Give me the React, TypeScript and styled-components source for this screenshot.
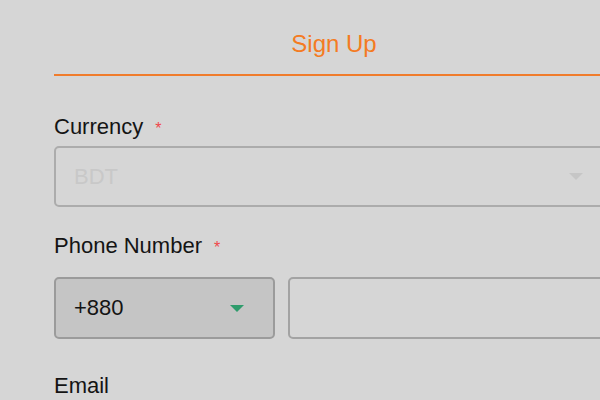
import React from 'react';
import styled, { createGlobalStyle } from 'styled-components';

const GlobalStyle = createGlobalStyle`
  html, body {
    margin: 0;
    padding: 0;
    background: #d6d6d6;
    overflow: hidden;
    font-family: 'Liberation Sans', Arial, sans-serif;
  }
`;

const App: React.FC = () => {
  return (
    <Page>
      <GlobalStyle />
      <Form>
        <Title>Sign Up</Title>

        <Label $top={40}>
          Currency<Required>*</Required>
        </Label>
        <SelectBox $gap={6}>
          <Placeholder>BDT</Placeholder>
          <Caret $color="#c6c6c6" />
        </SelectBox>

        <Label $top={28}>
          Phone Number<Required>*</Required>
        </Label>
        <PhoneRow>
          <CodeSelect>
            <CodeText>+880</CodeText>
            <Caret $color="#2f9c6c" />
          </CodeSelect>
          <TextBox />
        </PhoneRow>

        <Label $top={36}>Email</Label>
      </Form>
    </Page>
  );
};

export default App;

const Page = styled.div`
  width: 600px;
  height: 400px;
  overflow: hidden;
`;

const Form = styled.div`
  display: flex;
  flex-direction: column;
  width: 560px;
  margin-left: 54px;
`;

const Title = styled.div`
  padding: 32px 0 18px;
  font-size: 24px;
  line-height: 24px;
  color: #f47b22;
  text-align: center;
  border-bottom: 2px solid #f07c2c;
`;

interface ILabelProps {
  $top: number;
}

const Label = styled.div<ILabelProps>`
  margin-top: ${({ $top }) => $top}px;
  font-size: 22px;
  line-height: 22px;
  color: #141414;
`;

const Required = styled.span`
  margin-left: 12px;
  font-size: 16px;
  color: #f0474a;
`;

interface ISelectProps {
  $gap: number;
}

const SelectBox = styled.div<ISelectProps>`
  margin-top: ${({ $gap }) => $gap}px;
  height: 61px;
  box-sizing: border-box;
  display: flex;
  align-items: center;
  justify-content: space-between;
  padding: 0 29px 0 18px;
  border: 2px solid #acacac;
  border-radius: 5px;
  background: #d6d6d6;
`;

const Placeholder = styled.span`
  font-size: 22px;
  color: #c8c8c8;
`;

interface ICaretProps {
  $color: string;
}

const Caret = styled.span<ICaretProps>`
  width: 0;
  height: 0;
  border-left: 7px solid transparent;
  border-right: 7px solid transparent;
  border-top: 7px solid ${({ $color }) => $color};
`;

const PhoneRow = styled.div`
  display: flex;
  gap: 13px;
  margin-top: 18px;
  height: 62px;
`;

const CodeSelect = styled.div`
  width: 221px;
  flex-shrink: 0;
  box-sizing: border-box;
  display: flex;
  align-items: center;
  justify-content: space-between;
  padding: 0 29px 0 18px;
  border: 2px solid #9b9b9b;
  border-radius: 5px;
  background: #c5c5c5;
`;

const CodeText = styled.span`
  font-size: 22px;
  color: #141414;
`;

const TextBox = styled.div`
  flex: 1;
  box-sizing: border-box;
  border: 2px solid #a3a3a3;
  border-radius: 5px;
  background: #d6d6d6;
`;
